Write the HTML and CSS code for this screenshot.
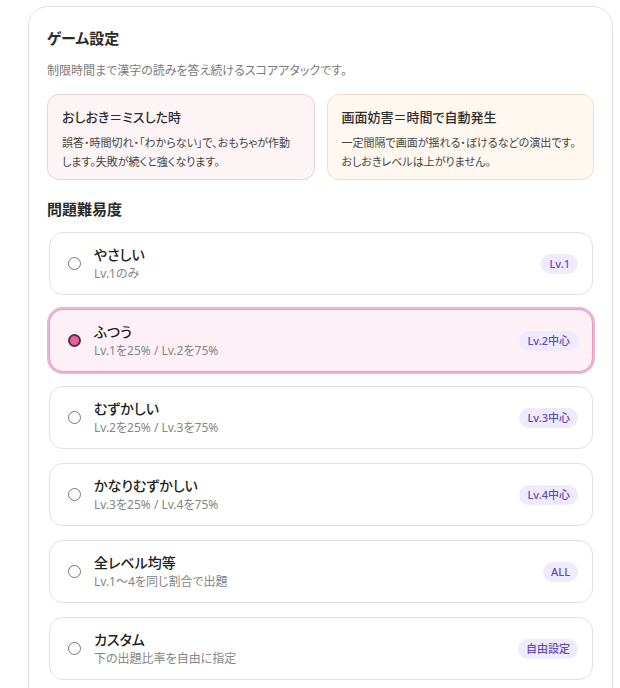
FILE: index.html
```html
<!doctype html>
<html lang="ja">

<head>
    <meta charset="utf-8">
    <meta name="viewport" content="width=device-width, initial-scale=1">
    <title>ゲーム設定</title>

    <link rel="stylesheet" href="styles.css">

</head>

<body>
    <div class="panel">
        <h2 class="panel-title">ゲーム設定</h2>
        <p class="panel-desc">制限時間まで漢字の読みを答え続けるスコアアタックです。</p>

        <div class="info-row">
            <div class="info info-pink">
                <div class="info-title">おしおき＝ミスした時</div>
                <div class="info-text">誤答・時間切れ・「わからない」で、おもちゃが作動<br>します。失敗が続くと強くなります。</div>
            </div>
            <div class="info info-orange">
                <div class="info-title">画面妨害＝時間で自動発生</div>
                <div class="info-text">一定間隔で画面が揺れる・ぼけるなどの演出です。<br>おしおきレベルは上がりません。</div>
            </div>
        </div>

        <h3 class="section-title">問題難易度</h3>

        <div class="options">
            <label class="option">
                <input type="radio" name="level" value="easy">
                <span class="option-body">
                    <span class="option-name">やさしい</span>
                    <span class="option-sub">Lv.1のみ</span>
                </span>
                <span class="badge">Lv.1</span>
            </label>

            <label class="option selected">
                <input type="radio" name="level" value="normal" checked>
                <span class="option-body">
                    <span class="option-name">ふつう</span>
                    <span class="option-sub">Lv.1を25% / Lv.2を75%</span>
                </span>
                <span class="badge">Lv.2中心</span>
            </label>

            <label class="option">
                <input type="radio" name="level" value="hard">
                <span class="option-body">
                    <span class="option-name">むずかしい</span>
                    <span class="option-sub">Lv.2を25% / Lv.3を75%</span>
                </span>
                <span class="badge">Lv.3中心</span>
            </label>

            <label class="option">
                <input type="radio" name="level" value="veryhard">
                <span class="option-body">
                    <span class="option-name">かなりむずかしい</span>
                    <span class="option-sub">Lv.3を25% / Lv.4を75%</span>
                </span>
                <span class="badge">Lv.4中心</span>
            </label>

            <label class="option">
                <input type="radio" name="level" value="all">
                <span class="option-body">
                    <span class="option-name">全レベル均等</span>
                    <span class="option-sub">Lv.1～4を同じ割合で出題</span>
                </span>
                <span class="badge">ALL</span>
            </label>

            <label class="option">
                <input type="radio" name="level" value="custom">
                <span class="option-body">
                    <span class="option-name">カスタム</span>
                    <span class="option-sub">下の出題比率を自由に指定</span>
                </span>
                <span class="badge">自由設定</span>
            </label>
        </div>
    </div>
</body>

</html>
```

FILE: styles.css
```css
body {
    margin: 0;
    background-color: #ffffff;
    color: #333333;
    font-family: "Noto Sans", "Noto Sans CJK JP", sans-serif;
    font-feature-settings: "palt";
}

.panel {
    width: 547px;
    margin: 6px 0 0 28px;
    padding: 20px 18px 30px;
    border: 1px solid #e3e3e8;
    border-radius: 20px;
}

.panel-title {
    margin: 0;
    font-size: 15px;
    line-height: 22px;
    font-weight: 700;
    color: #2b2b2b;
}

.panel-desc {
    margin: 13px 0 0;
    font-size: 12px;
    line-height: 18px;
    color: #7a7a7a;
}

.info-row {
    display: grid;
    grid-template-columns: 1fr 1fr;
    gap: 12px;
    margin-top: 14px;
}

.info {
    padding: 12px 14px 8px;
    border-radius: 12px;
    border: 1px solid;
}

.info-pink {
    background-color: #fdf4f6;
    border-color: #f1cdd8;
}

.info-orange {
    background-color: #fff8f0;
    border-color: #f5ddc3;
}

.info-title {
    font-size: 13px;
    line-height: 20px;
    font-weight: 500;
    color: #2e2e2e;
}

.info-text {
    margin-top: 6px;
    font-size: 11px;
    line-height: 19px;
    color: #444444;
}

.section-title {
    margin: 18px 0 0;
    font-size: 15px;
    line-height: 22px;
    font-weight: 700;
    color: #2b2b2b;
}

.options {
    display: flex;
    flex-direction: column;
    gap: 14px;
    margin-top: 12px;
    padding: 0 1px 0 2px;
}

.option {
    display: flex;
    align-items: center;
    height: 63px;
    box-sizing: border-box;
    padding: 0 14px 0 18px;
    border: 1px solid #e2e2e6;
    border-radius: 14px;
    background-color: #ffffff;
    cursor: pointer;
}

.option.selected {
    background-color: #fdf1f7;
    border-color: #e59cc2;
    box-shadow: 0 0 0 2px #eeb4d2;
}

.option input {
    appearance: none;
    flex: none;
    width: 13px;
    height: 13px;
    margin: 0 13px 0 0;
    border: 1px solid #767676;
    border-radius: 50%;
    background-color: #ffffff;
}

.option input:checked {
    border: 2px solid #5e2f47;
    background-color: #e2649e;
}

.option-body {
    flex: 1;
    display: flex;
    flex-direction: column;
}

.option-name {
    font-size: 14px;
    line-height: 20px;
    font-weight: 500;
    color: #222222;
}

.option-sub {
    font-size: 12px;
    line-height: 18px;
    color: #858585;
}

.badge {
    flex: none;
    padding: 0 8px;
    height: 20px;
    line-height: 20px;
    border-radius: 10px;
    background-color: #efeafc;
    color: #5e4bb8;
    font-size: 11px;
    font-weight: 500;
}
```
